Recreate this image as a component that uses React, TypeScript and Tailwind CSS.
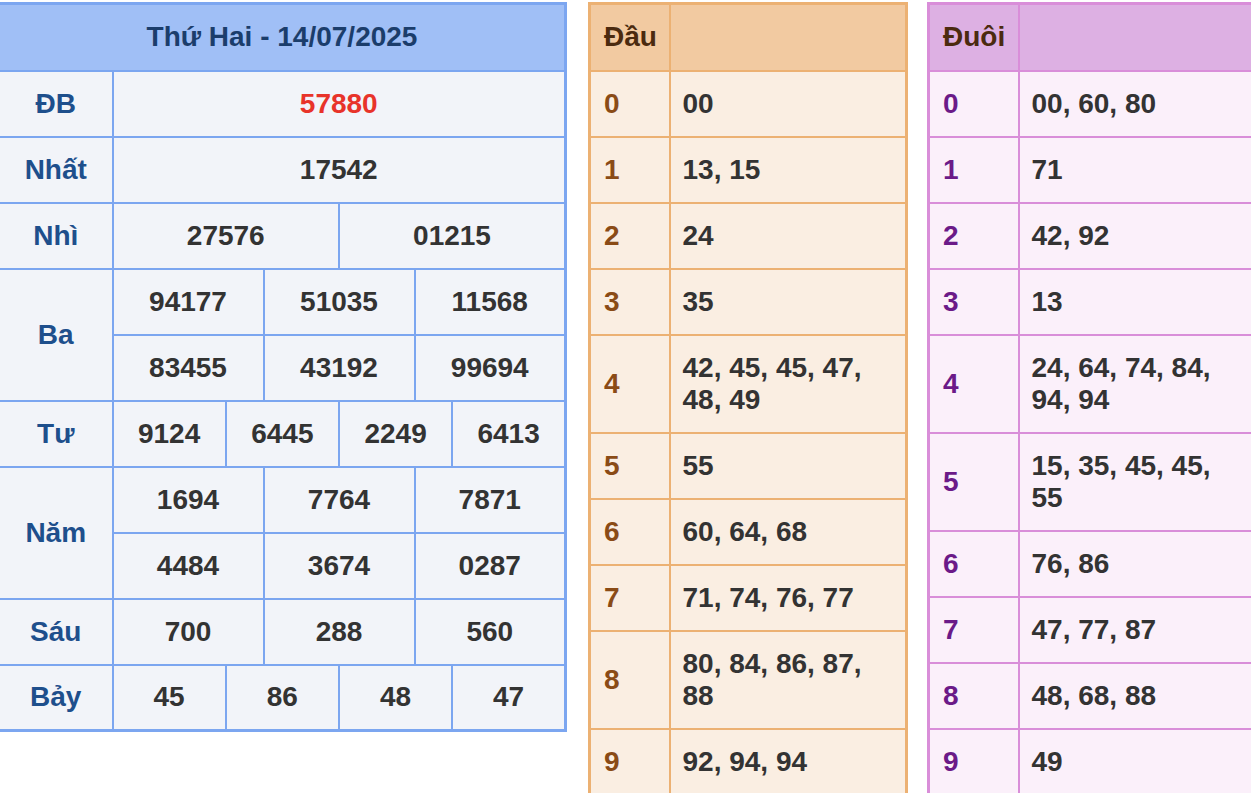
import React from "react";

const font = { fontFamily: '"Liberation Sans", Arial, sans-serif' };

type Row = { label: string; values: string[][]; red?: boolean };

const rows: Row[] = [
  { label: "ĐB", values: [["57880"]], red: true },
  { label: "Nhất", values: [["17542"]] },
  { label: "Nhì", values: [["27576", "01215"]] },
  { label: "Ba", values: [["94177", "51035", "11568"], ["83455", "43192", "99694"]] },
  { label: "Tư", values: [["9124", "6445", "2249", "6413"]] },
  { label: "Năm", values: [["1694", "7764", "7871"], ["4484", "3674", "0287"]] },
  { label: "Sáu", values: [["700", "288", "560"]] },
  { label: "Bảy", values: [["45", "86", "48", "47"]] },
];

const dau = [
  ["0", "00"],
  ["1", "13, 15"],
  ["2", "24"],
  ["3", "35"],
  ["4", "42, 45, 45, 47, 48, 49"],
  ["5", "55"],
  ["6", "60, 64, 68"],
  ["7", "71, 74, 76, 77"],
  ["8", "80, 84, 86, 87, 88"],
  ["9", "92, 94, 94"],
];

const duoi = [
  ["0", "00, 60, 80"],
  ["1", "71"],
  ["2", "42, 92"],
  ["3", "13"],
  ["4", "24, 64, 74, 84, 94, 94"],
  ["5", "15, 35, 45, 45, 55"],
  ["6", "76, 86"],
  ["7", "47, 77, 87"],
  ["8", "48, 68, 88"],
  ["9", "49"],
];

function ResultTable() {
  const cells: React.ReactNode[] = [];
  rows.forEach((r, ri) => {
    r.values.forEach((line, li) => {
      const span = 12 / line.length;
      cells.push(
        <tr key={`${ri}-${li}`}>
          {li === 0 && (
            <td
              rowSpan={r.values.length}
              className="h-[66px] border-2 border-[#7ca6f0] p-0 text-center align-middle text-[28px] font-bold text-[#1e4f8c]"
            >
              {r.label}
            </td>
          )}
          {line.map((v, vi) => (
            <td
              key={vi}
              colSpan={span}
              className={`h-[66px] border-2 border-[#7ca6f0] p-0 text-center align-middle text-[28px] font-bold ${
                r.red ? "text-[#e8332a]" : "text-[#333333]"
              }`}
            >
              {v}
            </td>
          ))}
        </tr>
      );
    });
  });
  return (
    <table className="w-[570px] shrink-0 table-fixed border-collapse border-[3px] border-[#7ca6f0] bg-[#f2f4f9] leading-[32px]">
      <colgroup>
        <col className="w-[114px]" />
        {Array.from({ length: 12 }).map((_, i) => (
          <col key={i} />
        ))}
      </colgroup>
      <thead>
        <tr>
          <th
            colSpan={13}
            className="h-[67px] border-[3px] border-b-2 border-[#7ca6f0] bg-[#a0bff6] p-0 text-center align-middle text-[28px] font-bold text-[#1b3d6b]"
          >
            Thứ Hai - 14/07/2025
          </th>
        </tr>
      </thead>
      <tbody>{cells}</tbody>
    </table>
  );
}

function LotoTable({
  title,
  data,
  width,
  firstCol,
  border,
  headBg,
  bodyBg,
  idxColor,
  extra,
}: {
  title: string;
  data: string[][];
  width: string;
  firstCol: string;
  border: string;
  headBg: string;
  bodyBg: string;
  idxColor: string;
  extra: string;
}) {
  return (
    <table className={`${width} ${extra} shrink-0 table-fixed border-collapse border-[3px] ${border} ${bodyBg} leading-[32px]`}>
      <colgroup>
        <col className={firstCol} />
        <col />
      </colgroup>
      <thead>
        <tr className={headBg}>
          <th className={`h-[67px] border-2 border-t-[3px] ${border} px-[13px] py-0 text-left align-middle text-[28px] font-bold text-[#4b2a0f]`}>
            {title}
          </th>
          <th className={`h-[67px] border-2 border-t-[3px] ${border} p-0`}></th>
        </tr>
      </thead>
      <tbody>
        {data.map(([k, v]) => (
          <tr key={k}>
            <td className={`h-[66px] border-2 ${border} px-[13px] py-[16px] align-middle text-[28px] font-bold ${idxColor}`}>{k}</td>
            <td className={`h-[66px] border-2 ${border} px-[12px] py-[16px] align-middle text-[28px] font-bold text-[#333333]`}>{v}</td>
          </tr>
        ))}
      </tbody>
    </table>
  );
}

export default function App() {
  return (
    <div className="h-[793px] w-[1251px] overflow-hidden bg-white" style={font}>
      <div className="-ml-[3px] flex items-start pt-[2px]">
        <ResultTable />
        <LotoTable
          title="Đầu"
          data={dau}
          width="w-[320px]"
          extra="ml-[21px]"
          firstCol="w-[80px]"
          border="border-[#ecb173]"
          headBg="bg-[#f2caa1]"
          bodyBg="bg-[#faeee2]"
          idxColor="text-[#8a4b16]"
        />
        <LotoTable
          title="Đuôi"
          data={duoi}
          width="w-[334px]"
          extra="ml-[19px]"
          firstCol="w-[90px]"
          border="border-[#d98ed9]"
          headBg="bg-[#ddb0e3]"
          bodyBg="bg-[#fbf0fa]"
          idxColor="text-[#6b1a88]"
        />
      </div>
    </div>
  );
}
